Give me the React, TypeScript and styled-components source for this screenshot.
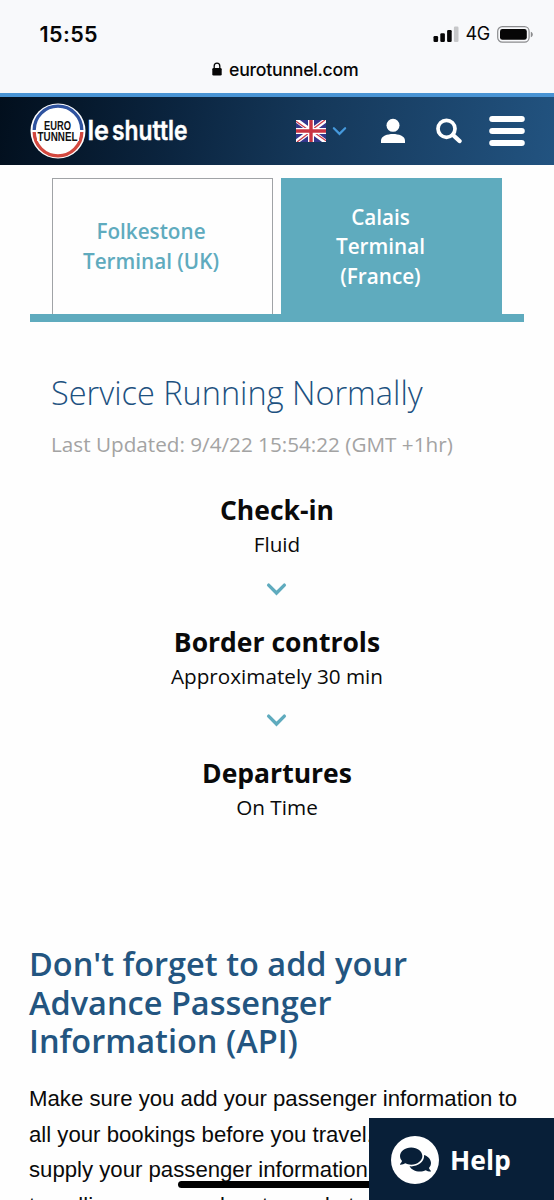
import React from 'react';
import styled, { createGlobalStyle } from 'styled-components';
import { FaComments } from 'react-icons/fa';

const GlobalStyle = createGlobalStyle`
  *, *::before, *::after { box-sizing: border-box; }
  html, body { margin: 0; padding: 0; background: #fefefe; }
  body { overflow: hidden; }
  h1, h2, h3, p { margin: 0; }
  button { border: 0; background: none; padding: 0; font: inherit; color: inherit; }
  svg { display: block; }
`;

const Screen = styled.div`
  position: relative;
  width: 554px;
  height: 1200px;
  overflow: hidden;
  background: #fefefe;
  font-family: 'Open Sans', sans-serif;
  color: #0a0a0a;
`;

const BrowserBar = styled.header`
  height: 97px;
  background: #f8f9fb;
  border-bottom: 4px solid #4994d4;
  font-family: Inter, sans-serif;
  color: #060606;
`;

const StatusRow = styled.div`
  display: flex;
  align-items: center;
  justify-content: space-between;
  height: 56px;
  padding: 12px 20px 0 39.5px;
`;

const Clock = styled.span`
  font-size: 21.5px;
  line-height: 24px;
  font-weight: 600;
  letter-spacing: 0.4px;
`;

const StatusIcons = styled.div`
  display: flex;
  align-items: center;
  gap: 7px;
`;

const Network = styled.span`
  font-size: 18px;
  line-height: 22px;
  letter-spacing: -0.3px;
`;

const AddressRow = styled.div`
  display: flex;
  align-items: center;
  gap: 7px;
  height: 26px;
  padding-left: 212px;
  font-size: 17.7px;
  font-weight: 500;
  letter-spacing: -0.25px;
`;

const NavBar = styled.nav`
  display: flex;
  align-items: center;
  height: 68px;
  padding: 0 28px 0 30px;
  background: linear-gradient(100deg, #020f1d 0%, #0b2540 32%, #15385a 56%, #225380 100%);
  color: #fff;
`;

const Brand = styled.div`
  display: flex;
  align-items: center;
  width: 266px;
  flex: none;
`;

const LanguageButton = styled.button`
  display: flex;
  align-items: center;
  gap: 6px;
  width: 84px;
  flex: none;
`;

const IconButton = styled.button<{ $width: number }>`
  width: ${(p) => p.$width}px;
  flex: none;
`;

const Tabs = styled.div`
  display: flex;
  gap: 8px;
  margin: 13px 30px 0;
  padding: 0 22px;
  border-bottom: 8px solid #5fabbe;
`;

const Tab = styled.button<{ $active?: boolean }>`
  display: flex;
  align-items: center;
  justify-content: center;
  width: 221px;
  height: 136px;
  padding: ${(p) => (p.$active ? '1px 51px 0 29px' : '1px 24px 0 1px')};
  border: ${(p) => (p.$active ? '1px solid #5fabbe' : '1.5px solid #a0a3a6')};
  border-bottom: 0;
  background: ${(p) => (p.$active ? '#5fabbe' : '#fefefe')};
  color: ${(p) => (p.$active ? '#fff' : '#5fabbe')};
  font-size: 20.7px;
  line-height: 29.6px;
  font-weight: 600;
  white-space: nowrap;
  text-align: center;
`;

const Status = styled.section`
  padding: 47px 51px 0;
`;

const StatusTitle = styled.h1`
  font-size: 32.5px;
  line-height: 48px;
  font-weight: 300;
  color: #1d5180;
  white-space: nowrap;
`;

const Updated = styled.p`
  margin-top: 13px;
  font-size: 20.7px;
  line-height: 28px;
  color: #a3a3a3;
  white-space: nowrap;
`;

const Steps = styled.div`
  display: flex;
  flex-direction: column;
  align-items: center;
  margin-top: 34px;
`;

const Step = styled.div`
  text-align: center;
`;

const StepTitle = styled.h2`
  font-size: 26.5px;
  line-height: 36px;
  font-weight: 700;
`;

const StepValue = styled.p`
  font-size: 20.7px;
  line-height: 33px;
`;

const StepArrow = styled.div`
  display: flex;
  align-items: center;
  height: 54px;
  padding: 2px 1px 0 0;
  margin-bottom: 8.5px;
`;

const Notice = styled.section`
  padding: 121px 30px 0 29px;
`;

const NoticeTitle = styled.h2`
  font-size: 32.5px;
  line-height: 38.5px;
  font-weight: 600;
  color: #235580;
`;

const NoticeText = styled.p`
  margin-top: 20.5px;
  font-family: 'Liberation Sans', Arial, sans-serif;
  font-size: 22.18px;
  line-height: 35.5px;
  white-space: nowrap;
`;

const HomeIndicator = styled.div`
  position: absolute;
  left: 178px;
  top: 1181px;
  width: 198px;
  height: 7px;
  border-radius: 4px;
  background: #000;
`;

const HelpButton = styled.button`
  position: absolute;
  left: 369px;
  top: 1118px;
  display: flex;
  align-items: center;
  gap: 11px;
  width: 185px;
  height: 82px;
  padding: 1px 0 0 22px;
  background: #081f38;
  color: #fff;
  font-size: 26.5px;
  font-weight: 700;
`;

const HelpIcon = styled.span`
  display: flex;
  align-items: center;
  justify-content: center;
  width: 48px;
  height: 48px;
  border-radius: 50%;
  background: #fff;
  color: #081f38;
`;

const SignalIcon = () => (
  <svg width="26" height="17" viewBox="0 0 26 17" fill="#060606">
    <rect x="0.5" y="10" width="4.6" height="6" rx="1.2" />
    <rect x="7.3" y="7.3" width="4.6" height="8.7" rx="1.2" />
    <rect x="14.1" y="4" width="4.6" height="12" rx="1.2" />
    <rect x="20.9" y="0.6" width="4.6" height="15.4" rx="1.2" fill="#c6c7c9" />
  </svg>
);

const BatteryIcon = () => (
  <svg width="37" height="17" viewBox="0 0 37 17">
    <rect x="0.7" y="0.7" width="31.4" height="15.4" rx="4.6" fill="none" stroke="#8b8c8e" strokeWidth="1.2" />
    <rect x="3" y="3" width="26.8" height="10.8" rx="2.4" fill="#060606" />
    <path d="M33.8 5.8c1.6.6 2 1.6 2 2.7s-.4 2.1-2 2.7z" fill="#8b8c8e" />
  </svg>
);

const LockIcon = () => (
  <svg width="10" height="14" viewBox="0 0 10 14">
    <path d="M2.2 6.5V4.1a2.8 3 0 0 1 5.6 0v2.4" fill="none" stroke="#060606" strokeWidth="1.3" />
    <rect x="0.3" y="6" width="9.4" height="7.6" rx="1.3" fill="#060606" />
  </svg>
);

const Logo = () => (
  <svg width="160" height="56" viewBox="0 0 160 56" fontFamily="'Liberation Sans', Arial, sans-serif" fontWeight="700">
    <circle cx="28" cy="28" r="27.5" fill="#fff" />
    <path d="M4.2 27a23.8 23.8 0 0 1 47.6 0" fill="none" stroke="#2f539f" strokeWidth="3.3" />
    <path d="M4.2 29a23.8 23.8 0 0 0 47.6 0" fill="none" stroke="#d3483f" strokeWidth="3.3" />
    <rect x="7" y="27" width="42" height="11" fill="#fff" />
    <text x="27.5" y="27" fontSize="12.8" textAnchor="middle" textLength="27" lengthAdjust="spacingAndGlyphs" fill="#111">EURO</text>
    <text x="27.5" y="37.5" fontSize="12.8" textAnchor="middle" textLength="40" lengthAdjust="spacingAndGlyphs" fill="#111">TUNNEL</text>
    <g fill="#fff" stroke="#fff" strokeWidth="0.4" fontFamily="Inter, sans-serif" fontSize="26.5" fontWeight="600">
      <text x="57.5" y="37" textLength="21.5" lengthAdjust="spacingAndGlyphs">le</text>
      <text x="82" y="37" textLength="75.5" lengthAdjust="spacingAndGlyphs">shuttle</text>
    </g>
  </svg>
);

const FlagIcon = () => (
  <svg width="30" height="22" viewBox="0 0 30 22">
    <rect width="30" height="22" fill="#34378c" />
    <path d="M0 0l30 22M30 0L0 22" stroke="#fff" strokeWidth="4.6" />
    <path d="M0 1.2L12.5 10M30 20.8L17.5 12M29 0L17 9M1 22l12-9" stroke="#cf3d4b" strokeWidth="1.3" />
    <path d="M15 0v22M0 11h30" stroke="#fff" strokeWidth="6" />
    <path d="M15 0v22M0 11h30" stroke="#c93442" strokeWidth="3.4" />
  </svg>
);

const Chevron = ({ width, color, stroke }: { width: number; color: string; stroke: number }) => (
  <svg width={width} height={width * 0.7} viewBox="0 0 20 14">
    <path d="M2.5 3l7.5 7.5L17.5 3" fill="none" stroke={color} strokeWidth={stroke} strokeLinecap="round" strokeLinejoin="miter" />
  </svg>
);

const UserIcon = () => (
  <svg width="26" height="26" viewBox="0 0 26 26" fill="#fff">
    <circle cx="13" cy="7.3" r="6.5" />
    <path d="M1 25v-2.5C1 18 7.5 16 13 16s12 2 12 6.5V25z" />
  </svg>
);

const SearchIcon = () => (
  <svg width="28" height="26" viewBox="0 0 28 26" fill="none" stroke="#fff">
    <circle cx="11.5" cy="10.8" r="8.5" strokeWidth="3.7" />
    <path d="M18 17l6.5 6" strokeWidth="4.4" strokeLinecap="round" />
  </svg>
);

const MenuIcon = () => (
  <svg width="36" height="30" viewBox="0 0 36 30" stroke="#fff" strokeWidth="6" strokeLinecap="round">
    <path d="M3.2 3h29.6M3.2 15h29.6M3.2 27h29.6" />
  </svg>
);

const steps = [
  { title: 'Check-in', value: 'Fluid' },
  { title: 'Border controls', value: 'Approximately 30 min' },
  { title: 'Departures', value: 'On Time' },
];

export default function App() {
  return (
    <Screen>
      <GlobalStyle />
      <BrowserBar>
        <StatusRow>
          <Clock>15:55</Clock>
          <StatusIcons>
            <SignalIcon />
            <Network>4G</Network>
            <BatteryIcon />
          </StatusIcons>
        </StatusRow>
        <AddressRow>
          <LockIcon />
          <span>eurotunnel.com</span>
        </AddressRow>
      </BrowserBar>
      <NavBar>
        <Brand><Logo /></Brand>
        <LanguageButton aria-label="Language">
          <FlagIcon />
          <Chevron width={15} color="#4599dc" stroke={3} />
        </LanguageButton>
        <IconButton $width={55} aria-label="Account"><UserIcon /></IconButton>
        <IconButton $width={54} aria-label="Search"><SearchIcon /></IconButton>
        <IconButton $width={36} aria-label="Menu"><MenuIcon /></IconButton>
      </NavBar>
      <Tabs>
        <Tab>Folkestone<br />Terminal (UK)</Tab>
        <Tab $active>Calais<br />Terminal<br />(France)</Tab>
      </Tabs>
      <Status>
        <StatusTitle>Service Running Normally</StatusTitle>
        <Updated>Last Updated: 9/4/22 15:54:22 (GMT +1hr)</Updated>
        <Steps>
          {steps.map((step, i) => (
            <React.Fragment key={step.title}>
              <Step>
                <StepTitle>{step.title}</StepTitle>
                <StepValue>{step.value}</StepValue>
              </Step>
              {i < steps.length - 1 && (
                <StepArrow><Chevron width={21} color="#5fabbe" stroke={3.2} /></StepArrow>
              )}
            </React.Fragment>
          ))}
        </Steps>
      </Status>
      <Notice>
        <NoticeTitle>Don't forget to add your<br />Advance Passenger<br />Information (API)</NoticeTitle>
        <NoticeText>
          Make sure you add your passenger information to<br />
          all your bookings before you travel.<br />
          supply your passenger information<br />
          travelling, you may be stopped at
        </NoticeText>
      </Notice>
      <HomeIndicator />
      <HelpButton>
        <HelpIcon><FaComments size={31} /></HelpIcon>
        Help
      </HelpButton>
    </Screen>
  );
}
